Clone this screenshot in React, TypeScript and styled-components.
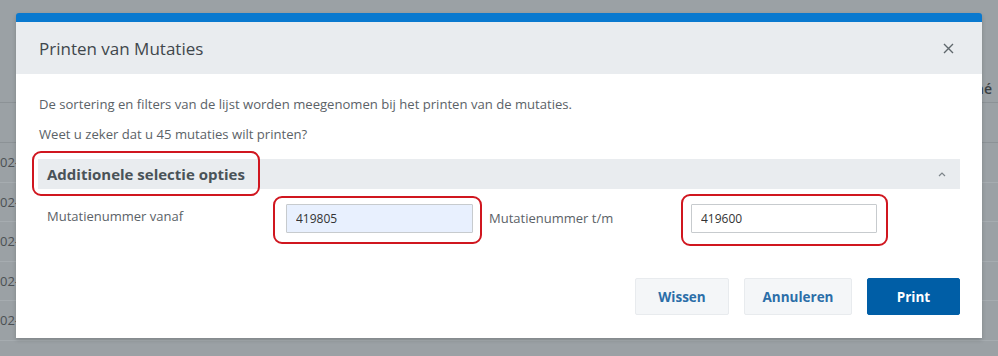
import React from 'react';
import styled, { createGlobalStyle } from 'styled-components';

const GlobalStyle = createGlobalStyle`
  html, body {
    margin: 0;
    padding: 0;
    width: 998px;
    height: 356px;
    overflow: hidden;
    background: #9ba1a5;
    font-family: "Open Sans", "Liberation Sans", sans-serif;
  }
  * { box-sizing: border-box; }
`;

const Page = styled.div`
  position: relative;
  width: 998px;
  height: 356px;
  overflow: hidden;
  background: #9ba1a5;
`;

/* dimmed page that lies under the dialog */
const Backdrop = styled.div`
  display: flex;
  flex-direction: column;
  padding-top: 75px;
`;

const HeadRow = styled.div`
  display: flex;
  justify-content: flex-end;
  align-items: center;
  height: 28px;
  border-bottom: 1px solid #8c9296;
  color: #3a3f42;
  font-size: 14px;
  font-weight: 600;
  padding-right: 6px;
`;

const FilterRow = styled.div`
  height: 40px;
  border-bottom: 1px solid #8c9296;
`;

const DataRow = styled.div`
  display: flex;
  align-items: center;
  height: 39.5px;
  border-bottom: 1px solid #a6acb0;
  color: #4b5053;
  font-size: 13px;
`;

const Dialog = styled.div`
  position: absolute;
  left: 16px;
  top: 13px;
  width: 966px;
  height: 325px;
  display: flex;
  flex-direction: column;
  background: #fff;
  border-top: 9px solid #0a79cf;
  border-radius: 3px 3px 0 0;
  box-shadow: 0 2px 4px rgba(0, 0, 0, 0.18);
`;

const Header = styled.div`
  display: flex;
  align-items: center;
  justify-content: space-between;
  height: 52px;
  padding: 0 26px 0 23px;
  background: #e9ecef;
`;

const Title = styled.h2`
  margin: 0;
  font-size: 17px;
  font-weight: 400;
  color: #3f474c;
`;

const CloseButton = styled.button`
  display: flex;
  align-items: center;
  justify-content: center;
  width: 16px;
  height: 16px;
  padding: 0;
  border: 0;
  background: transparent;
  color: #5f676c;
  cursor: pointer;
`;

const Body = styled.div`
  flex: 1;
  display: flex;
  flex-direction: column;
  padding: 21px 22px 23px 22px;
`;

const Text = styled.p`
  margin: 0 0 11px 1px;
  font-size: 13.1px;
  line-height: 19px;
  color: #5b6267;
`;

const SectionBar = styled.div`
  display: flex;
  align-items: center;
  justify-content: space-between;
  height: 30px;
  margin-top: 4px;
  padding: 0 14px 0 9px;
  background: #e9ecef;
`;

const SectionTitle = styled.span`
  position: relative;
  font-size: 15px;
  font-weight: 700;
  color: #4a5358;
`;

type MarkProps = { $l: number; $r: number; $t: number; $b: number };

/* red annotation drawn over a part */
const Mark = styled.span<MarkProps>`
  position: absolute;
  left: ${(p) => -p.$l}px;
  right: ${(p) => -p.$r}px;
  top: ${(p) => -p.$t}px;
  bottom: ${(p) => -p.$b}px;
  border: 2px solid #d0161f;
  border-radius: 9px;
  pointer-events: none;
`;

const Chevron = styled.span`
  display: flex;
  color: #7d858a;
`;

const FormRow = styled.div`
  display: grid;
  grid-template-columns: 239px 187px 16px 202px 186px;
  align-items: start;
  margin-top: 15px;
  padding-left: 9px;
`;

const Label = styled.label<{ $offset?: number }>`
  font-size: 13px;
  line-height: 19px;
  color: #5b6267;
  padding-top: ${(p) => p.$offset ?? 3}px;
`;

const FieldWrap = styled.div`
  position: relative;
`;

const Input = styled.input<{ $filled?: boolean }>`
  display: block;
  width: 100%;
  height: 29px;
  padding: 0 9px;
  border: 1px solid #c7cbce;
  border-radius: 1px;
  background: ${(p) => (p.$filled ? '#e8f0fe' : '#fff')};
  font-family: "Open Sans", "Liberation Sans", sans-serif;
  font-size: 12px;
  color: #333;
  outline: none;
`;

const Footer = styled.div`
  display: flex;
  justify-content: flex-end;
  gap: 15px;
  margin-top: auto;
`;

const Button = styled.button<{ $primary?: boolean; $w: number }>`
  width: ${(p) => p.$w}px;
  height: 37px;
  border-radius: 2px;
  border: 1px solid ${(p) => (p.$primary ? '#005ea6' : '#e8ebee')};
  background: ${(p) => (p.$primary ? '#005ea6' : '#f4f6f8')};
  color: ${(p) => (p.$primary ? '#fff' : '#2b6ea8')};
  font-family: "Open Sans", "Liberation Sans", sans-serif;
  font-size: 13.5px;
  font-weight: 700;
  cursor: pointer;
`;

const rows = [0, 1, 2, 3, 4];

export default function App() {
  return (
    <>
      <GlobalStyle />
      <Page>
        <Backdrop>
          <HeadRow>mé</HeadRow>
          <FilterRow />
          {rows.map((r) => (
            <DataRow key={r}>02-2021</DataRow>
          ))}
        </Backdrop>

        <Dialog>
          <Header>
            <Title>Printen van Mutaties</Title>
            <CloseButton aria-label="Sluiten">
              <svg width="11" height="11" viewBox="0 0 11 11">
                <path d="M1 1l9 9M10 1l-9 9" stroke="currentColor" strokeWidth="1.4" fill="none" />
              </svg>
            </CloseButton>
          </Header>
          <Body>
            <Text>De sortering en filters van de lijst worden meegenomen bij het printen van de mutaties.</Text>
            <Text>Weet u zeker dat u 45 mutaties wilt printen?</Text>
            <SectionBar>
              <SectionTitle>
                Additionele selectie opties
                <Mark $l={15} $r={15} $t={13} $b={12} />
              </SectionTitle>
              <Chevron>
                <svg width="8" height="5" viewBox="0 0 8 5">
                  <path d="M1 4l3-3 3 3" stroke="currentColor" strokeWidth="1.2" fill="none" />
                </svg>
              </Chevron>
            </SectionBar>
            <FormRow>
              <Label>Mutatienummer vanaf</Label>
              <FieldWrap>
                <Input $filled defaultValue="419805" />
                <Mark $l={13} $r={9} $t={8} $b={11} />
              </FieldWrap>
              <span />
              <Label $offset={5}>Mutatienummer t/m</Label>
              <FieldWrap>
                <Input defaultValue="419600" />
                <Mark $l={10} $r={11} $t={10} $b={13} />
              </FieldWrap>
            </FormRow>
            <Footer>
              <Button $w={94}>Wissen</Button>
              <Button $w={108}>Annuleren</Button>
              <Button $w={93} $primary>Print</Button>
            </Footer>
          </Body>
        </Dialog>
      </Page>
    </>
  );
}
